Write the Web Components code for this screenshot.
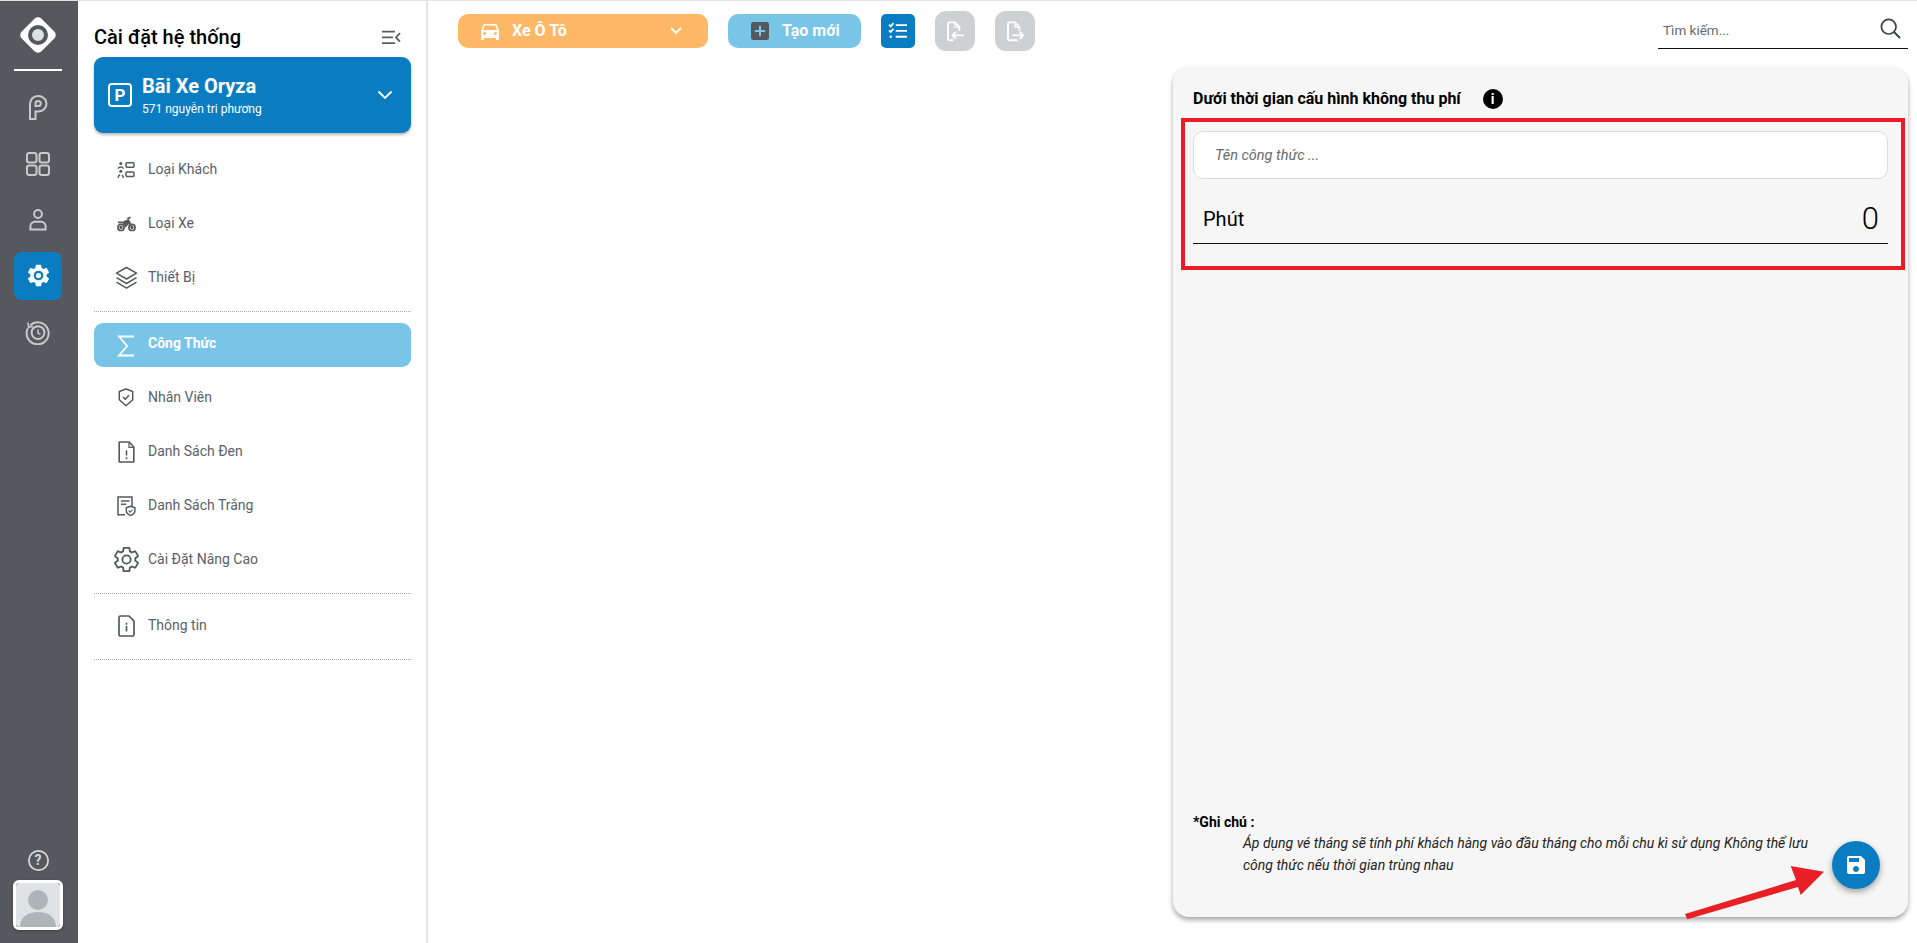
<!DOCTYPE html>
<html lang="vi">
<head>
<meta charset="utf-8">
<title>Cài đặt hệ thống</title>
<style>
html, body { margin: 0; height: 100%; overflow: hidden; background: #fff; font-family: Roboto, "Liberation Sans", sans-serif; }
</style>
</head>
<body>
<parking-app></parking-app>

<script>
const GEAR = 'M19.14 12.94c.04-.3.06-.61.06-.94 0-.32-.02-.64-.07-.94l2.03-1.58c.18-.14.23-.41.12-.61l-1.92-3.32c-.12-.22-.37-.29-.59-.22l-2.39.96c-.5-.38-1.03-.7-1.62-.94l-.36-2.54c-.04-.24-.24-.41-.48-.41h-3.84c-.24 0-.43.17-.47.41l-.36 2.54c-.59.24-1.13.57-1.62.94l-2.39-.96c-.22-.08-.47 0-.59.22L2.74 8.87c-.12.21-.08.47.12.61l2.03 1.58c-.05.3-.09.63-.09.94s.02.64.07.94l-2.03 1.58c-.18.14-.23.41-.12.61l1.92 3.32c.12.22.37.29.59.22l2.39-.96c.5.38 1.03.7 1.62.94l.36 2.54c.05.24.24.41.48.41h3.84c.24 0 .44-.17.47-.41l.36-2.54c.59-.24 1.13-.56 1.62-.94l2.39.96c.22.08.47 0 .59-.22l1.92-3.32c.12-.22.07-.47-.12-.61l-2.01-1.58z'

const ICONS = {
  logo: `<svg width="44" height="44" viewBox="0 0 44 44"><rect x="8" y="8" width="28" height="28" rx="5" fill="#fff" transform="rotate(45 22 22)"/><circle cx="22" cy="22" r="8" fill="#dfe0e1" stroke="#55585d" stroke-width="4"/></svg>`,
  park: `<svg width="20" height="25" viewBox="0 0 20 25" fill="none" stroke="currentColor" stroke-width="2"><path d="M2 24V9C2 4.500 5.500 1 10 1c4.800 0 8.500 3.300 8.500 7.500 0 4.600-3.700 8-8.500 8H7.500V24z"/><path d="M7.500 11V8.500C7.500 7 8.700 6 10 6c1.500 0 2.800 1 2.800 2.500S11.500 11 10 11z"/></svg>`,
  grid: `<svg width="26" height="26" viewBox="0 0 26 26" fill="none" stroke="currentColor" stroke-width="2"><rect x="2" y="2" width="9.5" height="9.5" rx="2.2"/><rect x="14.5" y="2" width="9.5" height="9.5" rx="2.2"/><rect x="2" y="14.5" width="9.5" height="9.5" rx="2.2"/><rect x="14.5" y="14.5" width="9.5" height="9.5" rx="2.2"/></svg>`,
  user: `<svg width="18" height="22" viewBox="0 0 18 22" fill="none" stroke="currentColor" stroke-width="2"><circle cx="9" cy="5" r="3.9"/><path d="M1.4 20.6v-3.4a4.4 4.4 0 0 1 4.4-4.4h6.4a4.4 4.4 0 0 1 4.4 4.4v3.4z"/></svg>`,
  gearFill: `<svg width="27" height="27" viewBox="0 0 24 24"><path d="${GEAR}" fill="#fff"/><circle cx="12" cy="12" r="3.3" fill="#fff" stroke="#0a7dc2" stroke-width="2"/></svg>`,
  history: `<svg width="26" height="26" viewBox="0 0 26 26" fill="none" stroke="currentColor" stroke-width="2"><path d="M5.2 6.2A11 11 0 1 1 3 9"/><path d="M3 3.5l.6 4.6 4.4-.7" stroke-width="1.6"/><circle cx="13" cy="13.6" r="6.4"/><path d="M13 10.4v3.6l2.4 1.4" stroke-width="1.6"/></svg>`,
  help: `<svg width="23" height="23" viewBox="0 0 23 23" fill="none" stroke="currentColor" stroke-width="1.8"><circle cx="11.5" cy="11.5" r="9.6"/></svg>`,
  collapse: `<svg width="20" height="15" viewBox="0 0 20 15" fill="none" stroke="#5a5d63" stroke-width="1.8"><path d="M1 1.6h13M1 7.4h11M1 13.2h13M19 3.2l-4 4.2 4 4.2"/></svg>`,
  chevron: `<svg width="16" height="10" viewBox="0 0 16 10" fill="none" stroke="#fff" stroke-width="1.8"><path d="M1.5 1.5 8 8l6.5-6.5"/></svg>`,
  guests: `<svg width="18" height="18" viewBox="0 0 18 18" fill="none" stroke="currentColor" stroke-width="1.5"><circle cx="3.800" cy="2.600" r="1.500" fill="currentColor" stroke="none"/><path d="M1.200 7.600c.6-2 4.600-2 5.200 0"/><circle cx="3.800" cy="10.200" r="1.500" fill="currentColor" stroke="none"/><path d="M1 16.800c.3-1.600.8-2.600 2.200-3M6.400 16.800c-.2-1.200-.6-2-1.400-2.600"/><rect x="9" y="1.800" width="8" height="4.400" rx="1"/><rect x="9" y="11" width="8" height="4.400" rx="1"/></svg>`,
  moto: `<svg width="19" height="16" viewBox="0 0 19 16" fill="none" stroke="currentColor" stroke-width="1.700"><circle cx="4" cy="11.400" r="3.100"/><circle cx="15" cy="11.400" r="3.100"/><circle cx="4" cy="11.400" r=".8" fill="currentColor"/><circle cx="15" cy="11.400" r=".8" fill="currentColor"/><path d="M1 6.400h5.200l2.400 3.800 3.400-3.700-1-3.300" /><path d="M6 6.400 8.500 4.600h3.600v2.800L8.600 9.800z" fill="currentColor" stroke-width="1"/><path d="M12.200 5.400 15 11.400M10.200 2.800l3.400-1.600" /></svg>`,
  layers: `<svg width="23" height="24" viewBox="0 0 23 24" fill="none" stroke="currentColor" stroke-width="1.500" stroke-linejoin="round"><path d="M11.500 1.500 21.500 7.200l-10 5.800-10-5.800z"/><path d="m1.500 11.700 10 5.800 10-5.800"/><path d="m1.500 16.200 10 6 10-6"/></svg>`,
  sigma: `<svg width="18" height="22" viewBox="0 0 18 22" fill="none" stroke="currentColor" stroke-width="1.800"><path d="M17 1.500H2L10 11 2 20.500h15"/></svg>`,
  shield: `<svg width="16" height="19" viewBox="0 0 16 19" fill="none" stroke="currentColor" stroke-width="1.500" stroke-linejoin="round"><path d="M8 1 14.700 3.500v8.200L8 17.800 1.300 11.700V3.500z"/><path d="M5.100 9.100 7.300 11.300l3.700-4"/></svg>`,
  fileWarn: `<svg width="17" height="22" viewBox="0 0 17 22" fill="none" stroke="currentColor" stroke-width="1.600"><path d="M1.200 1h10l4.600 5v15H1.200z" stroke-linejoin="round"/><path d="M11 1v5.300h4.800" stroke-width="1.200"/><path d="M8.500 9.400v5.200M8.500 16.300v1.900"/></svg>`,
  fileCheck: `<svg width="19" height="20" viewBox="0 0 19 20" fill="none" stroke="currentColor" stroke-width="1.500"><path d="M8 18.800H1V1h14v9"/><path d="M4 5h8.400M4 8.300h5.200"/><path d="M13.600 10.300l4.300 1.400v3.300c0 2-2 3.500-4.300 4.400-2.300-.9-4.300-2.400-4.300-4.400v-3.300z" stroke-linejoin="round"/><path d="m11.700 14.700 1.500 1.500 2.500-2.700" stroke-width="1.100"/></svg>`,
  gear: `<svg width="25" height="25" viewBox="1.800 1.800 20.400 20.400" fill="none" stroke="currentColor" stroke-width="1.500"><path d="${GEAR}"/><circle cx="12" cy="12" r="3.400"/></svg>`,
  fileInfo: `<svg width="17" height="22" viewBox="0 0 17 22" fill="none" stroke="currentColor" stroke-width="1.700"><path d="M2.500 1h8.500l5 5.200v13.100A1.700 1.700 0 0 1 14.300 21H2.700A1.700 1.700 0 0 1 1 19.300V2.500A1.500 1.500 0 0 1 2.500 1z" stroke-linejoin="round"/><path d="M8.500 11v5.500M8.500 7.800v1.900"/></svg>`,
  car: `<svg width="24" height="24" viewBox="0 0 24 24" fill="#fff"><path d="M18.920 6.010C18.720 5.420 18.160 5 17.500 5h-11c-.66 0-1.210.42-1.420 1.010L3 12v8c0 .55.45 1 1 1h1c.55 0 1-.45 1-1v-1h12v1c0 .55.45 1 1 1h1c.55 0 1-.45 1-1v-8l-2.080-5.990zM6.500 16c-.83 0-1.500-.67-1.500-1.500S5.670 13 6.500 13s1.500.67 1.500 1.500S7.330 16 6.500 16zm11 0c-.83 0-1.500-.67-1.500-1.500s.67-1.500 1.500-1.500 1.500.67 1.500 1.500-.67 1.500-1.500 1.500zM5 11l1.500-4.500h11L19 11H5z"/></svg>`,
  plus: `<svg width="18" height="18" viewBox="0 0 18 18"><rect width="18" height="18" rx="2.500" fill="#55585d"/><path d="M9 3.800v10.400M3.800 9h10.400" stroke="#78c5e8" stroke-width="2"/></svg>`,
  checklist: `<svg width="20" height="18" viewBox="0 0 22 20" fill="none" stroke="#fff" stroke-width="2"><path d="m1 3 1.800 1.800L6 1.200M1 9.300l1.800 1.800L6 7.500"/><path d="M8.500 3.400H21M8.500 9.800H21M8.500 16.400H21"/><circle cx="3" cy="16.400" r="1.300" fill="#fff" stroke="none"/></svg>`,
  fileIn: `<svg width="18" height="21" viewBox="0 0 20 24" fill="none" stroke="#fff" stroke-width="2.100" stroke-linejoin="round"><path d="M8 22H3.500A1.500 1.500 0 0 1 2 20.500V3a1.500 1.500 0 0 1 1.500-1.500H10l5 5.500v4.500"/><path d="M10 1.500V7h5" stroke-width="1.400"/><path d="M20 16.500H7M11 12.500l-4 4 4 4"/></svg>`,
  fileOut: `<svg width="18" height="21" viewBox="0 0 20 24" fill="none" stroke="#fff" stroke-width="2.100" stroke-linejoin="round"><path d="M13 22H3.500A1.500 1.500 0 0 1 2 20.500V3a1.500 1.500 0 0 1 1.500-1.500H10l5 5.500v4.500"/><path d="M10 1.500V7h5" stroke-width="1.400"/><path d="M7 16.500h12.500M15.500 12.500l4 4-4 4"/></svg>`,
  search: `<svg width="21" height="21" viewBox="0 0 21 21" fill="none" stroke="#3f4246" stroke-width="1.700"><circle cx="8.700" cy="8.700" r="7.300"/><path d="m14 14 6 6" stroke-width="2"/></svg>`,
  save: `<svg width="24" height="24" viewBox="0 0 24 24" fill="#fff"><path d="M17 3H5c-1.110 0-2 .9-2 2v14c0 1.100.89 2 2 2h14c1.100 0 2-.9 2-2V7l-4-4zm-5 16c-1.660 0-3-1.340-3-3s1.340-3 3-3 3 1.340 3 3-1.340 3-3 3zm3-10H5V5h10v4z"/></svg>`,
  avatar: `<svg width="44" height="44" viewBox="0 0 44 44"><rect width="44" height="44" rx="3" fill="#e0e3e5"/><circle cx="22" cy="17" r="10" fill="#adb5b8"/><path d="M4 44c0-10 8-15 18-15s18 5 18 15z" fill="#adb5b8"/></svg>`
}

class BaseEl extends HTMLElement {
  connectedCallback() {
    if (this.shadowRoot) return
    this.attachShadow({mode: 'open'}).innerHTML = this.render()
  }
}

class RailItem extends BaseEl {
  render() {
    return `<style>
      :host { display: flex; width: 48px; height: 48px; align-items: center; justify-content: center; border-radius: 8px; color: #c9cacb; }
      :host([active]) { background: #0a7dc2; color: #fff; }
    </style>${ICONS[this.getAttribute('icon')]}`
  }
}
customElements.define('rail-item', RailItem)

class AppRail extends BaseEl {
  render() {
    return `<style>
      :host { display: flex; flex-direction: column; align-items: center; flex: none; width: 78px; padding-right: 2px; background: #55585d; box-sizing: border-box; }
      .logo { height: 68px; display: flex; align-items: center; justify-content: center; flex: none; }
      .line { width: 48px; height: 1.500px; background: #fff; margin-bottom: 13px; flex: none; }
      .items { display: flex; flex-direction: column; gap: 8px; }
      .help { margin-top: auto; position: relative; width: 23px; height: 23px; color: #d5d6d7; margin-bottom: 8px; }
      .help svg { display: block; }
      .help span { position: absolute; inset: 0; text-align: center; font: 700 14px/23px Roboto, sans-serif; }
      .avatar { width: 50px; height: 50px; box-sizing: border-box; border: 3px solid #fff; border-radius: 6px; margin-bottom: 13px; overflow: hidden; box-shadow: 0 1px 3px rgba(0,0,0,.3); }
      .avatar svg { display: block; }
    </style>
    <div class="logo">${ICONS.logo}</div>
    <div class="line"></div>
    <div class="items">
      <rail-item icon="park"></rail-item>
      <rail-item icon="grid"></rail-item>
      <rail-item icon="user"></rail-item>
      <rail-item icon="gearFill" active></rail-item>
      <rail-item icon="history"></rail-item>
    </div>
    <div class="help">${ICONS.help}<span>?</span></div>
    <div class="avatar">${ICONS.avatar}</div>`
  }
}
customElements.define('app-rail', AppRail)

class LotCard extends BaseEl {
  render() {
    return `<style>
      :host { display: flex; align-items: center; height: 76px; box-sizing: border-box; padding: 0 18px 0 14px; background: #0a7dc2; border-radius: 9px; color: #fff; box-shadow: 0 2px 3px rgba(0,0,0,.28); }
      .p { width: 24px; height: 24px; box-sizing: border-box; border: 2px solid #fff; border-radius: 4px; font: 700 17px/20px Roboto, sans-serif; text-align: center; margin-right: 10px; flex: none; }
      .txt { flex: 1; }
      .name { font: 700 20px/22px Roboto, sans-serif; }
      .addr { font: 400 12px/14px Roboto, sans-serif; margin-top: 5px; }
    </style>
    <div class="p">P</div>
    <div class="txt"><div class="name"><slot name="name"></slot></div><div class="addr"><slot name="addr"></slot></div></div>
    ${ICONS.chevron}`
  }
}
customElements.define('lot-card', LotCard)

class MenuItem extends BaseEl {
  render() {
    return `<style>
      :host { display: flex; align-items: center; height: 54px; color: #5a5f69; font: 400 14px/20px Roboto, sans-serif; }
      :host([active]) { height: 44px; box-sizing: border-box; background: #78c5e8; color: #fff; font-weight: 700; border-radius: 9px; margin: 11px 0 3px; padding-bottom: 5px; }
      .ic { width: 44px; margin-left: 10px; display: flex; justify-content: center; align-items: center; flex: none; color: #55585d; padding-top: 1px; }
      :host([active]) .ic { color: #fff; padding-top: 6px; }
    </style>
    <div class="ic">${ICONS[this.getAttribute('icon')]}</div><slot></slot>`
  }
}
customElements.define('menu-item', MenuItem)

class SideMenu extends BaseEl {
  render() {
    return `<style>
      :host { display: flex; flex-direction: column; flex: none; width: 350px; box-sizing: border-box; padding: 0 15px 0 16px; border-right: 2px solid #e6e6e6; }
      .head { height: 56px; display: flex; align-items: center; justify-content: space-between; padding-right: 10px; font: 500 20px/22px Roboto, sans-serif; color: #000; padding-top: 16px; box-sizing: border-box; }
      .list { margin-top: 9px; display: flex; flex-direction: column; }
      ::slotted(hr) { width: 100%; margin: 7px 0 0; border: 0; border-top: 1.500px dotted #a9a9a9; }
      ::slotted(hr.sm) { margin: 7px 0 4px; }
    </style>
    <div class="head"><slot name="title"></slot>${ICONS.collapse}</div>
    <slot name="card"></slot>
    <div class="list"><slot></slot></div>`
  }
}
customElements.define('side-menu', SideMenu)

class PillButton extends BaseEl {
  render() {
    return `<style>
      :host { display: flex; align-items: center; box-sizing: border-box; height: 34px; border-radius: 10px; color: #fff; font: 700 16px/20px Roboto, sans-serif; flex: none; }
      svg { display: block; flex: none; }
    </style><slot></slot>`
  }
}
customElements.define('pill-button', PillButton)

class TopBar extends BaseEl {
  render() {
    const p = 'pill-button'
    return `<style>
      :host { display: flex; align-items: center; flex: none; height: 40px; margin: 10px 9px 16px 30px; }
      .sel { width: 250px; background: #ffb966; padding: 0 26px 0 20px; margin-right: 20px; }
      .sel .label { margin-left: 10px; flex: 1; }
      .add { width: 133px; background: #78c5e8; padding-left: 23px; margin-right: 20px; }
      .add .label { margin-left: 13px; }
      .chk { width: 34px; background: #0a7dc2; justify-content: center; margin-right: 20px; border-radius: 5px; }
      .file { width: 40px; height: 40px; background: #ced1d1; justify-content: center; margin-right: 20px; border-radius: 11px; }
      .search { margin-left: auto; width: 250px; height: 38px; margin-top: -2px; box-sizing: border-box; border-bottom: 1.500px solid #111; display: flex; align-items: center; justify-content: space-between; padding: 0 7px 0 5px; font: 400 13.500px/18px Roboto, sans-serif; color: #666a70; }
      .search svg { margin-top: -2px; }
    </style>
    <${p} class="sel">${ICONS.car}<span class="label">Xe Ô Tô</span><svg width="12" height="8" viewBox="0 0 12 8" fill="none" stroke="#fff" stroke-width="1.800"><path d="M1 1l5 5 5-5"/></svg></${p}>
    <${p} class="add">${ICONS.plus}<span class="label">Tạo mới</span></${p}>
    <${p} class="chk">${ICONS.checklist}</${p}>
    <${p} class="file">${ICONS.fileIn}</${p}>
    <${p} class="file">${ICONS.fileOut}</${p}>
    <div class="search"><span>Tìm kiếm...</span>${ICONS.search}</div>`
  }
}
customElements.define('top-bar', TopBar)

class FormulaCard extends BaseEl {
  render() {
    return `<style>
      :host { display: flex; flex-direction: column; position: relative; flex: 1; width: 735px; align-self: flex-end; margin: 0 9px 26px 0; background: #f6f6f6; border-radius: 16px; box-shadow: 0 3px 5px rgba(0,0,0,.35); color: #000; }
      .title { display: flex; align-items: center; height: 20px; margin: 22px 0 9px 20px; font: 700 16px/20px Roboto, sans-serif; }
      .info { width: 20px; height: 20px; margin-left: 22px; border-radius: 50%; background: #000; color: #fff; text-align: center; font: 700 14px/20px Roboto, sans-serif; }
      .mark { box-sizing: border-box; height: 152px; margin: 0 3px 0 8px; border: 4px solid #ec1c24; padding: 9px 13px 0 8px; }
      .name { box-sizing: border-box; height: 48px; background: #fff; border: 1px solid #dcdcdc; border-radius: 10px; padding-left: 21px; font: italic 400 14.500px/47px Roboto, sans-serif; color: #666a70; }
      .field { display: flex; justify-content: space-between; align-items: center; height: 65px; box-sizing: border-box; padding: 15px 9px 0 10px; border-bottom: 1.500px solid #111; }
      .field .k { font: 400 20px/24px Roboto, sans-serif; }
      .field .v { font: 300 31px/30px Roboto, sans-serif; }
      .note { margin: auto 80px 41px 20px; font: 400 14px/22px Roboto, sans-serif; }
      .note b { display: block; font-size: 14px; line-height: 20px; }
      .note i { display: block; margin-left: 50px; color: #222; font-size: 14px; }
      .fab { position: absolute; right: 28px; bottom: 28px; width: 48px; height: 48px; border-radius: 50%; background: #0a7dc2; display: flex; align-items: center; justify-content: center; box-shadow: 0 3px 6px rgba(0,0,0,.35); }
      .arrow { position: absolute; left: 507px; top: 793px; overflow: visible; }
    </style>
    <div class="title"><span>Dưới thời gian cấu hình không thu phí</span><span class="info">i</span></div>
    <div class="mark">
      <div class="name">Tên công thức ...</div>
      <div class="field"><span class="k">Phút</span><span class="v">0</span></div>
    </div>
    <div class="note"><b>*Ghi chú :</b><i>Áp dụng vé tháng sẽ tính phí khách hàng vào đầu tháng cho mỗi chu kì sử dụng Không thể lưu công thức nếu thời gian trùng nhau</i></div>
    <div class="fab">${ICONS.save}</div>
    <svg class="arrow" width="150" height="64" viewBox="0 0 150 64"><polygon points="144,11.700 110.700,6 116,20 5,54 7.300,59.300 118,27 120.700,35" fill="#e81f24"/></svg>`
  }
}
customElements.define('formula-card', FormulaCard)

class ParkingApp extends BaseEl {
  render() {
    return `<style>
      :host { display: flex; height: 100vh; box-sizing: border-box; border-top: 1px solid #e2e2e2; }
      main { flex: 1; min-width: 0; display: flex; flex-direction: column; }
    </style>
    <app-rail></app-rail>
    <side-menu>
      <span slot="title">Cài đặt hệ thống</span>
      <lot-card slot="card"><span slot="name">Bãi Xe Oryza</span><span slot="addr">571 nguyễn tri phương</span></lot-card>
      <menu-item icon="guests">Loại Khách</menu-item>
      <menu-item icon="moto">Loại Xe</menu-item>
      <menu-item icon="layers">Thiết Bị</menu-item>
      <hr>
      <menu-item icon="sigma" active>Công Thức</menu-item>
      <menu-item icon="shield">Nhân Viên</menu-item>
      <menu-item icon="fileWarn">Danh Sách Đen</menu-item>
      <menu-item icon="fileCheck">Danh Sách Trắng</menu-item>
      <menu-item icon="gear">Cài Đặt Nâng Cao</menu-item>
      <hr class="sm">
      <menu-item icon="fileInfo">Thông tin</menu-item>
      <hr>
    </side-menu>
    <main>
      <top-bar></top-bar>
      <formula-card></formula-card>
    </main>`
  }
}
customElements.define('parking-app', ParkingApp)
</script>
</body>
</html>
